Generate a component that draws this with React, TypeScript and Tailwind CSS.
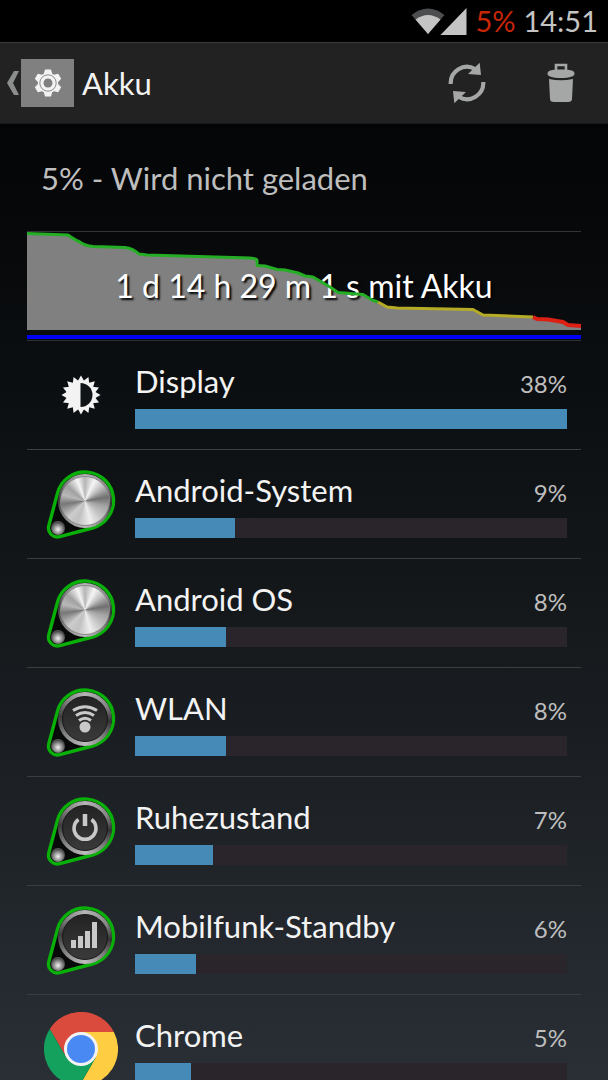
import type { ReactNode } from "react";

export default function App() {
  return (
    <div className="flex h-screen flex-col overflow-hidden bg-black font-['Lato',sans-serif] text-[#f3f3f3]">
      <StatusBar />
      <ActionBar />

      <main className="min-h-0 flex-1 overflow-hidden bg-linear-to-b from-[#040506] via-[#14181b] to-[#2a2f36] px-[27px]">
        <p className="flex h-[108px] items-center border-b border-[#333435] px-[14px] pt-0.5 text-[31px] text-[#bebebe]">
          5% - Wird nicht geladen
        </p>
        <BatteryHistory />
        <ul>
          {consumers.map((item) => (
            <li key={item.name} className="flex h-[109px] items-center border-b border-[#3b3e41] pr-[14px]">
              <div className="flex w-[108px] shrink-0 justify-center">{item.icon}</div>
              <div className="flex-1">
                <div className="flex h-12 items-baseline justify-between">
                  <span className="text-[31px] leading-10">{item.name}</span>
                  <span className="text-[24px] text-[#bebebe]">{item.percent}%</span>
                </div>
                <div className="h-5 bg-[#29252b]">
                  <div className="h-full bg-[#468ab8]" style={{ width: `${item.share}%` }} />
                </div>
              </div>
            </li>
          ))}
        </ul>
      </main>
    </div>
  );
}

function StatusBar() {
  return (
    <div className="flex h-[42px] shrink-0 items-center justify-end bg-black pr-[10px] text-[29px] text-[#c4c4c4]">
      <svg width="56" height="28" viewBox="0 0 56 28" aria-hidden="true">
        <path d="M0.5 8Q17 -5 33.5 8L17 27Z" fill="#4c4e50" />
        <path d="M4.5 12.5Q17 3.500 29.500 12.500L17 27Z" fill="#c4c4c4" />
        <path d="M29.500 28L55.500 1V28Z" fill="#c4c4c4" />
      </svg>
      <span className="ml-2 text-[#c82506]">5%</span>
      <span className="ml-2">14:51</span>
    </div>
  );
}

function ActionBar() {
  return (
    <header className="flex h-[82px] shrink-0 items-center border-t border-b border-t-[#3a3a3a] border-b-[#15181a] bg-[#222222]">
      <button type="button" aria-label="Zurück" className="flex items-center pl-[7px]">
        <svg width="14" height="26" viewBox="0 0 14 26" aria-hidden="true">
          <path d="M7 1H12L6 13L12 25H7L0 13Z" fill="#8c8e8e" />
        </svg>
        <span className="flex h-12 w-[53px] items-center justify-center bg-[#808080]">
          <GearIcon />
        </span>
      </button>
      <h1 className="ml-2 flex-1 text-[31px]">Akku</h1>
      <button type="button" aria-label="Aktualisieren" className="mr-[60px]">
        <svg width="40" height="42" viewBox="0 0 40 42" fill="none" aria-hidden="true">
          <path d="M3.700 22A16.300 16.300 0 0 1 28 7" stroke="#a5a7a6" strokeWidth="4.200" />
          <path d="M32.700 0.700L34 13L21 12Z" fill="#a5a7a6" />
          <path d="M36.300 20A16.300 16.300 0 0 1 12 35" stroke="#a5a7a6" strokeWidth="4.200" />
          <path d="M7.300 41.300L6 29L19 30Z" fill="#a5a7a6" />
        </svg>
      </button>
      <button type="button" aria-label="Löschen" className="mr-[33px]">
        <svg width="28" height="40" viewBox="0 0 28 40" aria-hidden="true">
          <path d="M9 8V2H19V8" fill="none" stroke="#a5a7a6" strokeWidth="2.600" />
          <path d="M0.500 11C0.500 7.500 4 6.500 14 6.500S27.500 7.500 27.500 11C27.500 13 23 15 14 15S0.500 13 0.500 11Z" fill="#a5a7a6" />
          <path d="M2 16Q14 18.500 26 16L25 36Q25 39 21 39H7Q3 39 3 36Z" fill="#a5a7a6" />
        </svg>
      </button>
    </header>
  );
}

function GearIcon() {
  return (
    <svg width="28" height="28" viewBox="-14 -14 28 28" aria-hidden="true">
      {[0, 60, 120, 180, 240, 300].map((angle) => (
        <path key={angle} d="M-4.500 -8L-3 -13.500H3L4.500 -8Z" fill="#f3f3f3" transform={`rotate(${angle})`} />
      ))}
      <circle r="10.200" fill="#f3f3f3" />
      <circle r="8.200" fill="none" stroke="#808080" strokeWidth="0.900" />
      <circle r="4.500" fill="#808080" />
    </svg>
  );
}

function BatteryHistory() {
  return (
    <section className="relative h-[109px] border-b border-[#2e3031]">
      <svg className="absolute inset-x-0 top-0 h-[98px] w-full" viewBox="0 0 554 98" preserveAspectRatio="none" aria-hidden="true">
        <path
          d="M0 1.500L41 3L60 13.500L103 16L112 22L223 26L230 28V33.500L250 37.500L271 41L278 44L286 45L303 55L311 60.500L336 62.500L345 68L351 70L360 75L446 77.500L456 83L506 85L510 87L521 87.500L536 90L541 93L554 94V98H0Z"
          fill="#808080"
        />
      </svg>
      <p className="absolute inset-x-0 top-0 flex h-[108px] items-center justify-center text-[32px] text-white [text-shadow:2px_2px_2px_#000000]">
        1 d 14 h 29 m 1 s mit Akku
      </p>
      {/* level line runs in front of the label */}
      <svg className="absolute inset-x-0 top-0 h-[98px] w-full" viewBox="0 0 554 98" preserveAspectRatio="none" fill="none" strokeWidth="3" strokeLinejoin="round" aria-hidden="true">
        <path
          d="M0 1.500L41 3Q48 8 52 9.500Q58 14 66 14.500L98 15.500Q106 16.500 112 22L120 23L223 26Q230 26.500 230 28V33.500L238 34L250 37.500L258 38L271 41L278 44L286 45L303 55L311 60.500L336 62.500L345 68L351 70"
          stroke="#25ae25"
        />
        <path d="M351 70L360 75L370 76L446 77.500L456 83L506 85" stroke="#b5ab25" />
        <path d="M506 85L510 87L521 87.500L536 90L541 93L554 94" stroke="#dc2014" strokeWidth="4" />
      </svg>
      <div className="absolute inset-x-0 bottom-[1px] h-1 bg-[#0000f4]" />
    </section>
  );
}

function BrightnessIcon() {
  return (
    <svg width="40" height="40" viewBox="-20 -20 40 40" aria-hidden="true">
      {Array.from({ length: 16 }, (_, i) => (
        <path key={i} d="M-3.400 -13.500L0 -19.500L3.400 -13.500Z" fill="#f3f3f3" transform={`rotate(${i * 22.5})`} />
      ))}
      <circle r="14.500" fill="#f3f3f3" />
      <path d="M-0.500 -12A12 12 0 0 1 -0.500 12Z" fill="#111416" />
    </svg>
  );
}

function Knob({ children }: { children?: ReactNode }) {
  return (
    <div className="relative size-[72px]">
      <svg className="absolute inset-0" width="72" height="72" viewBox="0 0 72 72" aria-hidden="true">
        <path
          d="M3.800 57.700L12.500 25.100A28.500 28.500 0 1 1 47.400 60L14.800 68.700A9 9 0 0 1 3.800 57.700Z"
          fill="#080909"
          stroke="#08b008"
          strokeWidth="3.400"
        />
      </svg>
      {/* brushed metal rim */}
      <span className="absolute top-[6px] left-[13px] size-[54px] rounded-full bg-[conic-gradient(#b5b5b5,#858585_60deg,#333333_95deg,#777777_130deg,#bdbdbd_180deg,#858585_230deg,#3c3c3c_275deg,#8a8a8a_320deg,#b5b5b5)]" />
      {children ? (
        <span className="absolute top-[10px] left-[17px] size-[46px] rounded-full border border-[#151515] bg-linear-to-b from-[#232323] to-[#3a3a3a]" />
      ) : (
        <span className="absolute top-[8px] left-[15px] size-[50px] rounded-full border border-[#8a8a8a] bg-[conic-gradient(#b5b5b5,#f5f5f5_25deg,#c0c0c0_50deg,#707070_80deg,#a5a5a5_105deg,#c5c5c5_135deg,#eeeeee_165deg,#c0c0c0_200deg,#cccccc_225deg,#777777_262deg,#b8b8b8_285deg,#a0a0a0_310deg,#f5f5f5_340deg,#b5b5b5)]" />
      )}
      <span className="absolute top-[53px] left-[6px] size-[14px] rounded-full bg-[radial-gradient(circle_at_50%_60%,#f2f2f2,#9a9a9a_35%,#4a4a4a_65%,#8a8a8a)]" />
      {children && (
        <svg
          className="absolute top-[13px] left-[20px]"
          width="40"
          height="40"
          viewBox="-20 -20 40 40"
          fill="none"
          stroke="#c9c9c9"
          strokeWidth="3"
          aria-hidden="true"
        >
          {children}
        </svg>
      )}
    </div>
  );
}

function ChromeIcon() {
  return (
    <svg width="74" height="74" viewBox="0 0 74 74" className="shrink-0" aria-hidden="true">
      <path d="M5.800 17A37 37 0 0 1 69.900 20H37L37 37L22.300 45.500Z" fill="#da4a3d" />
      <path d="M69.900 20A37 37 0 0 1 35.300 74L51.700 45.500L37 37V20Z" fill="#ffcd41" />
      <path d="M35.300 74A37 37 0 0 1 5.800 17L22.300 45.500L37 37L51.700 45.500Z" fill="#13a15d" />
      <circle cx="37" cy="37" r="17" fill="#f3f3f3" />
      <circle cx="37" cy="37" r="14" fill="#4889f4" />
    </svg>
  );
}

const consumers = [
  { name: "Display", percent: 38, share: 100, icon: <BrightnessIcon /> },
  { name: "Android-System", percent: 9, share: 23.1, icon: <Knob /> },
  { name: "Android OS", percent: 8, share: 21.1, icon: <Knob /> },
  {
    name: "WLAN",
    percent: 8,
    share: 21.1,
    icon: (
      <Knob>
        <path d="M-12 -8.500Q0 -16 12 -8.500" />
        <path d="M-9 -3.500Q0 -9.500 9 -3.500" />
        <path d="M-6 1.500Q0 -3 6 1.500" />
        <circle cy="8" r="5.500" fill="#c9c9c9" stroke="none" />
      </Knob>
    ),
  },
  {
    name: "Ruhezustand",
    percent: 7,
    share: 18.1,
    icon: (
      <Knob>
        <path d="M-6.500 -8.500A11 11 0 1 0 6.500 -8.500" strokeWidth="3.500" />
        <path d="M0 -14V-2" strokeWidth="4.500" />
      </Knob>
    ),
  },
  {
    name: "Mobilfunk-Standby",
    percent: 6,
    share: 14.1,
    icon: (
      <Knob>
        <path d="M-11.500 11V3M-4.500 11V-1M2.500 11V-6M9.500 11V-15" strokeWidth="5" />
      </Knob>
    ),
  },
  { name: "Chrome", percent: 5, share: 13, icon: <ChromeIcon /> },
];
